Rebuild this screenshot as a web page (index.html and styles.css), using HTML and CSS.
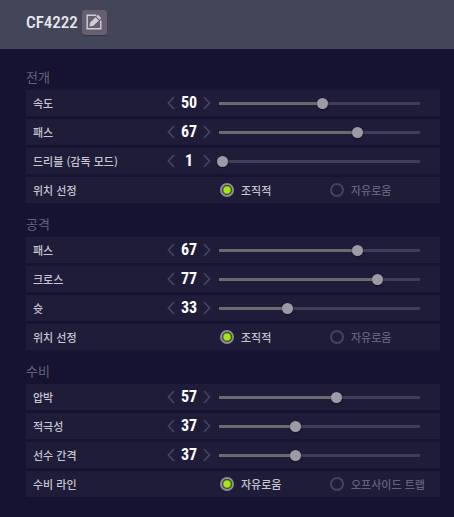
FILE: index.html
```html
<!DOCTYPE html>
<html lang="ko">
<head>
  <meta charset="UTF-8">
  <title>CF4222</title>
  <meta name="viewport" content="width=device-width, initial-scale=1.0">
  <link rel="stylesheet" href="styles.css">
</head>
<body>
  <header>
    <h1>CF4222</h1>
    <button class="btn-edit" type="button" aria-label="편집">
      <svg width="16" height="16" viewBox="0 0 16 16" fill="none">
        <path d="M10.4 1.2H1.2V14.8H14.8V6.6" stroke="currentColor" stroke-width="1.4"/>
        <path d="M3.4 12.4L4.2 8.6L9.6 3.2L12.8 6.4L7.4 11.8Z" fill="currentColor"/>
        <path d="M10.3 2.5L12 0.8L15.2 4L13.5 5.7Z" fill="currentColor"/>
      </svg>
    </button>
  </header>

  <main id="tactics"></main>

  <script src="script.js"></script>
</body>
</html>
```
FILE: styles.css
```css
* { box-sizing: border-box; }
body {
  margin: 0;
  min-height: 100vh;
  background: #151331;
  color: #c6c5d2;
  font-family: 'Noto Sans CJK KR', sans-serif;
  font-size: 11px;
  line-height: 16px;
}
button {
  padding: 0;
  border: none;
  background: none;
  cursor: pointer;
}

/* Header */
header {
  display: flex;
  align-items: center;
  gap: 4px;
  height: 49px;
  padding: 0 26px 5px;
  background: #434659;
}
h1 {
  margin: 0;
  color: #e8e8ee;
  font-family: 'Roboto Condensed', 'Liberation Sans Narrow', 'Liberation Sans', sans-serif;
  font-size: 17px;
  font-weight: 500;
  line-height: 24px;
}
.btn-edit {
  display: flex;
  align-items: center;
  justify-content: center;
  width: 25px;
  height: 25px;
  border-radius: 3px;
  background: #655f70;
  color: #d0ced4;
  box-shadow: 0 1px 1px rgba(0, 0, 0, 0.25);
}

/* Sections */
main { padding: 18px 14px 20px 26px; }
.group {
  display: flex;
  flex-direction: column;
  gap: 3px;
}
.group + .group { margin-top: 11px; }
h2 {
  margin: 0;
  color: #64627a;
  font-size: 13px;
  font-weight: 400;
  line-height: 20px;
}
.row {
  display: grid;
  grid-template-columns: 131px 50px 1fr;
  align-items: center;
  height: 26px;
  padding: 0 12px 0 7px;
  background: #1e1c39;
}
.name { font-weight: 500; }

/* Number with arrows */
.stepper {
  display: grid;
  grid-template-columns: 14px 22px 14px;
  align-items: center;
}
.stepper button {
  display: flex;
  justify-content: center;
  color: #45435b;
}
.stepper output {
  color: #fff;
  font-family: 'Roboto Condensed', 'Liberation Sans Narrow', 'Liberation Sans', sans-serif;
  font-size: 16px;
  font-weight: 700;
  line-height: 18px;
  text-align: center;
}

/* Slider */
.slider {
  --fill: calc((var(--value) - 1) / 98 * (100% - 11px) + 3px);
  appearance: none;
  width: calc(100% - 3px);
  height: 11px;
  margin: 0 0 0 3px;
  background:
    linear-gradient(#6b6a70, #6b6a70) 2px 4px / var(--fill) 3px no-repeat,
    linear-gradient(#3f3d57, #3f3d57) 2px 4px / calc(100% - 10px) 3px no-repeat;
}
.slider::-webkit-slider-thumb {
  appearance: none;
  width: 11px;
  height: 11px;
  border-radius: 50%;
  background: #9d99a6;
  box-shadow: 0 1px 2px rgba(0, 0, 0, 0.4);
}

/* Radio options */
.options {
  display: grid;
  grid-column: 3;
  grid-template-columns: 110px 1fr;
  padding-left: 6px;
}
.options label {
  display: flex;
  align-items: center;
  gap: 7px;
  color: #64627a;
  font-weight: 500;
  white-space: nowrap;
}
.options label:has(:checked) { color: #c6c5d2; }
.options input {
  appearance: none;
  flex: none;
  width: 14px;
  height: 14px;
  margin: 0;
  border: 2px solid #45435b;
  border-radius: 50%;
}
.options input:checked {
  border-color: #8f8d9a;
  background: radial-gradient(circle, #a5e812 3px, #1b1a2a 5px);
}
```
FILE: script.js
```js
const groups = [
  { title: '전개', rows: [['속도', 50], ['패스', 67], ['드리블 (감독 모드)', 1], ['위치 선정', ['조직적', '자유로움']]] },
  { title: '공격', rows: [['패스', 67], ['크로스', 77], ['슛', 33], ['위치 선정', ['조직적', '자유로움']]] },
  { title: '수비', rows: [['압박', 57], ['적극성', 37], ['선수 간격', 37], ['수비 라인', ['자유로움', '오프사이드 트랩']]] }
];

const arrow = d => `<svg width="8" height="14" viewBox="0 0 8 14" fill="none" stroke="currentColor" stroke-width="1.8"><path d="${d}"/></svg>`;

function sliderRow(name, value, id) {
  return `<div class="row">
    <label class="name" for="${id}">${name}</label>
    <div class="stepper">
      <button type="button" data-step="-1" aria-label="${name} 감소">${arrow('M7 1L1.5 7L7 13')}</button>
      <output for="${id}">${value}</output>
      <button type="button" data-step="1" aria-label="${name} 증가">${arrow('M1 1L6.5 7L1 13')}</button>
    </div>
    <input class="slider" type="range" id="${id}" min="1" max="99" value="${value}" style="--value:${value}">
  </div>`;
}

function radioRow(name, options, id) {
  return `<div class="row" role="radiogroup" aria-labelledby="${id}">
    <span class="name" id="${id}">${name}</span>
    <div class="options">
      ${options.map((o, i) => `<label><input type="radio" name="${id}-opt"${i === 0 ? ' checked' : ''}>${o}</label>`).join('')}
    </div>
  </div>`;
}

document.getElementById('tactics').innerHTML = groups.map((g, gi) => `<section class="group">
  <h2>${g.title}</h2>
  ${g.rows.map(([name, v], i) => (Array.isArray(v) ? radioRow : sliderRow)(name, v, `t${gi}-${i}`)).join('')}
</section>`).join('');

document.querySelectorAll('.slider').forEach(slider => {
  const row = slider.closest('.row');
  const update = () => {
    row.querySelector('output').textContent = slider.value;
    slider.style.setProperty('--value', slider.value);
  };
  slider.addEventListener('input', update);
  row.querySelectorAll('[data-step]').forEach(btn => {
    btn.addEventListener('click', () => {
      slider.value = Number(slider.value) + Number(btn.dataset.step);
      update();
    });
  });
});
```
